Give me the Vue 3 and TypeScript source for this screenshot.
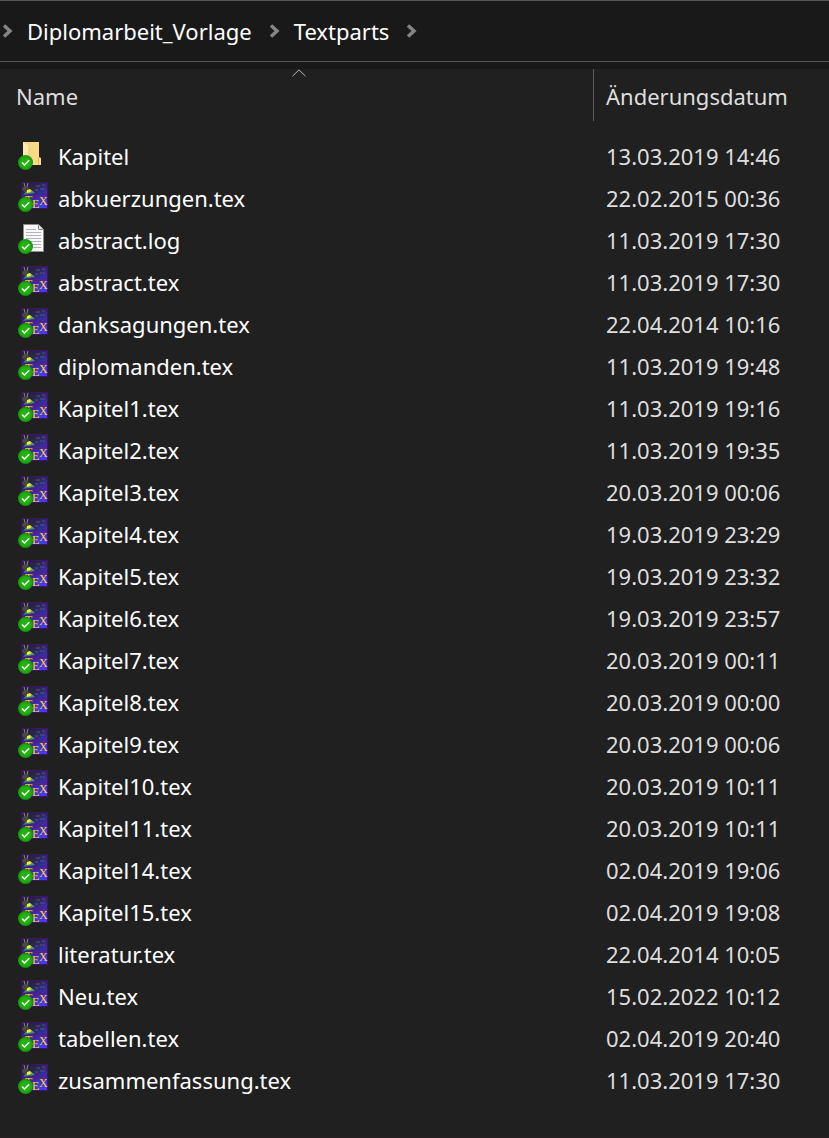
<script setup lang="ts">
type Kind = 'folder' | 'log' | 'tex'

interface Entry {
  name: string
  date: string
  kind: Kind
}

const crumbs: string[] = ['Diplomarbeit_Vorlage', 'Textparts']

const entries: Entry[] = [
  { name: 'Kapitel', date: '13.03.2019 14:46', kind: 'folder' },
  { name: 'abkuerzungen.tex', date: '22.02.2015 00:36', kind: 'tex' },
  { name: 'abstract.log', date: '11.03.2019 17:30', kind: 'log' },
  { name: 'abstract.tex', date: '11.03.2019 17:30', kind: 'tex' },
  { name: 'danksagungen.tex', date: '22.04.2014 10:16', kind: 'tex' },
  { name: 'diplomanden.tex', date: '11.03.2019 19:48', kind: 'tex' },
  { name: 'Kapitel1.tex', date: '11.03.2019 19:16', kind: 'tex' },
  { name: 'Kapitel2.tex', date: '11.03.2019 19:35', kind: 'tex' },
  { name: 'Kapitel3.tex', date: '20.03.2019 00:06', kind: 'tex' },
  { name: 'Kapitel4.tex', date: '19.03.2019 23:29', kind: 'tex' },
  { name: 'Kapitel5.tex', date: '19.03.2019 23:32', kind: 'tex' },
  { name: 'Kapitel6.tex', date: '19.03.2019 23:57', kind: 'tex' },
  { name: 'Kapitel7.tex', date: '20.03.2019 00:11', kind: 'tex' },
  { name: 'Kapitel8.tex', date: '20.03.2019 00:00', kind: 'tex' },
  { name: 'Kapitel9.tex', date: '20.03.2019 00:06', kind: 'tex' },
  { name: 'Kapitel10.tex', date: '20.03.2019 10:11', kind: 'tex' },
  { name: 'Kapitel11.tex', date: '20.03.2019 10:11', kind: 'tex' },
  { name: 'Kapitel14.tex', date: '02.04.2019 19:06', kind: 'tex' },
  { name: 'Kapitel15.tex', date: '02.04.2019 19:08', kind: 'tex' },
  { name: 'literatur.tex', date: '22.04.2014 10:05', kind: 'tex' },
  { name: 'Neu.tex', date: '15.02.2022 10:12', kind: 'tex' },
  { name: 'tabellen.tex', date: '02.04.2019 20:40', kind: 'tex' },
  { name: 'zusammenfassung.tex', date: '11.03.2019 17:30', kind: 'tex' },
]
</script>

<template>
  <div class="explorer">
    <svg class="defs" width="0" height="0" aria-hidden="true">
      <defs>
        <linearGradient id="texSky" x1="0.1" y1="0" x2="0.7" y2="1">
          <stop offset="0" stop-color="#222028" />
          <stop offset="0.3" stop-color="#29264a" />
          <stop offset="0.6" stop-color="#352e9c" />
          <stop offset="1" stop-color="#443bf5" />
        </linearGradient>
        <linearGradient id="beam" x1="0" y1="0" x2="0" y2="1">
          <stop offset="0" stop-color="#f4f020" />
          <stop offset="0.5" stop-color="#4f9a70" />
          <stop offset="1" stop-color="#2f5c9a" />
        </linearGradient>
        <linearGradient id="folderFront" x1="0" y1="0" x2="1" y2="0">
          <stop offset="0" stop-color="#f6d684" />
          <stop offset="1" stop-color="#fbdc89" />
        </linearGradient>
        <radialGradient id="okFill">
          <stop offset="0.6" stop-color="#22b30e" />
          <stop offset="1" stop-color="#189014" />
        </radialGradient>
      </defs>
    </svg>

    <nav class="path" aria-label="Pfad">
      <svg class="chevron" viewBox="0 0 11 14" aria-hidden="true"><path d="M2 1.5 8 7 2 12.5" /></svg>
      <template v-for="crumb in crumbs" :key="crumb">
        <button type="button" class="crumb">{{ crumb }}</button>
        <svg class="chevron" viewBox="0 0 11 14" aria-hidden="true"><path d="M2 1.5 8 7 2 12.5" /></svg>
      </template>
    </nav>

    <table class="files">
      <colgroup>
        <col />
        <col class="date-col" />
      </colgroup>
      <thead>
        <tr>
          <th scope="col" aria-sort="ascending">
            <svg class="sort" viewBox="0 0 14 8" aria-hidden="true"><path d="M.5 7.2 7 .9l6.500 6.300" /></svg>
            <button type="button" class="head">Name</button>
          </th>
          <th scope="col"><button type="button" class="head date-head">Änderungsdatum</button></th>
        </tr>
      </thead>
      <tbody>
        <tr v-for="entry in entries" :key="entry.name">
          <td>
            <div class="entry">
              <svg class="icon" viewBox="0 0 31 34" aria-hidden="true">
                <g v-if="entry.kind === 'folder'">
                  <path d="M5 3h16v15l2 1v7H5z" fill="url(#folderFront)" />
                  <path d="M5 3l6 4v19H5z" fill="#ffebb0" />
                  <path d="M11 7v19" stroke="#efc970" stroke-width="1" />
                  <path d="M20.500 18v8" stroke="#e3bb5c" stroke-width="1" />
                </g>
                <g v-else-if="entry.kind === 'log'">
                  <path d="M5.500 1.500h15l5 5v22h-20z" fill="#f8f8f8" stroke="#8c8c8c" />
                  <path d="M20.500 1.500v5h5" fill="#dedede" stroke="#8c8c8c" />
                  <path d="M8 6.500h10M8 9.500h15M8 12.500h15M8 15.500h15M8 18.500h15M8 21.500h15M8 24.500h15" stroke="#b0b4b8" />
                </g>
                <g v-else>
                  <rect x="3.500" y="1.500" width="26" height="26" fill="url(#texSky)" stroke="#42106e" />
                  <path d="M4 14 29 12v3L4 21z" fill="#5a188e" opacity=".5" />
                  <path d="M10 8h2l5 4-12 2z" fill="url(#beam)" />
                  <path d="M6 2l1 4M10 2 9 6" stroke="#8b8b86" stroke-width="1" />
                  <path d="M4 7l3-2 3 1 1 2-3 3-3-1z" fill="#484844" />
                  <path d="M9 9h3l1 2-4 1z" fill="#f4f01c" />
                  <path d="M18 5h4M24 4h3M17 9h3M22 8h5" stroke="#5f5f86" stroke-width=".8" />
                  <g class="tex-letters">
                    <text x="7" y="23">T</text>
                    <text x="14" y="27">E</text>
                    <text x="21" y="24">X</text>
                  </g>
                </g>
                <circle cx="7.500" cy="23.500" r="7.500" fill="url(#okFill)" />
                <path d="M4 23.500l2.500 2.500 4.700-4.700" fill="none" stroke="#fff" stroke-width="1.500" />
              </svg>
              <span>{{ entry.name }}</span>
            </div>
          </td>
          <td class="date">{{ entry.date }}</td>
        </tr>
      </tbody>
    </table>
  </div>
</template>

<style>
body {
  margin: 0;
  background: #202020;
}
</style>

<style scoped>
.explorer {
  box-sizing: border-box;
  min-height: 100vh;
  background: #202020;
  border-bottom: 1px solid #2a2024;
  color: #fff;
  font-family: "Noto Sans", "Open Sans", sans-serif;
  font-size: 22px;
  line-height: 30px;
}

.defs {
  position: absolute;
}

.path {
  display: flex;
  align-items: center;
  gap: 14px;
  height: 60px;
  padding-left: 2px;
  border-top: 1px solid #555;
  border-bottom: 1px solid #555;
  background: #191919;
}

.chevron {
  flex: none;
  width: 11px;
  height: 14px;
  fill: none;
  stroke: #858585;
  stroke-width: 3.500;
}

button {
  padding: 0;
  border: 0;
  background: none;
  color: inherit;
  font: inherit;
}

.crumb {
  padding-right: 3px;
}

.files {
  width: 100%;
  border-top: 7px solid #191919;
  border-spacing: 0;
  table-layout: fixed;
}

.date-col {
  width: 236px;
}

th {
  position: relative;
  height: 52px;
  padding: 0;
  text-align: left;
  font-weight: 400;
  color: #dedede;
}

th + th {
  border-left: 1px solid #5c5c5c;
}

.head {
  display: block;
  width: 100%;
  padding: 2px 0 0 16px;
  text-align: left;
}

.date-head {
  padding-left: 12px;
}

.sort {
  position: absolute;
  top: 0;
  left: 50%;
  width: 14px;
  height: 8px;
  margin-left: -5px;
  fill: none;
  stroke: #b5b5b5;
  stroke-width: 1;
}

tbody::before {
  content: "";
  display: block;
  height: 14px;
}

td {
  height: 42px;
  padding: 0;
}

.entry {
  display: flex;
  align-items: center;
  gap: 9px;
  padding-left: 18px;
}

.icon {
  flex: none;
  width: 31px;
  height: 34px;
}

.tex-letters {
  fill: #ffd21f;
  font-family: "Liberation Serif", serif;
  font-size: 12px;
}

.date {
  padding-left: 13px;
  color: #dedede;
}
</style>
